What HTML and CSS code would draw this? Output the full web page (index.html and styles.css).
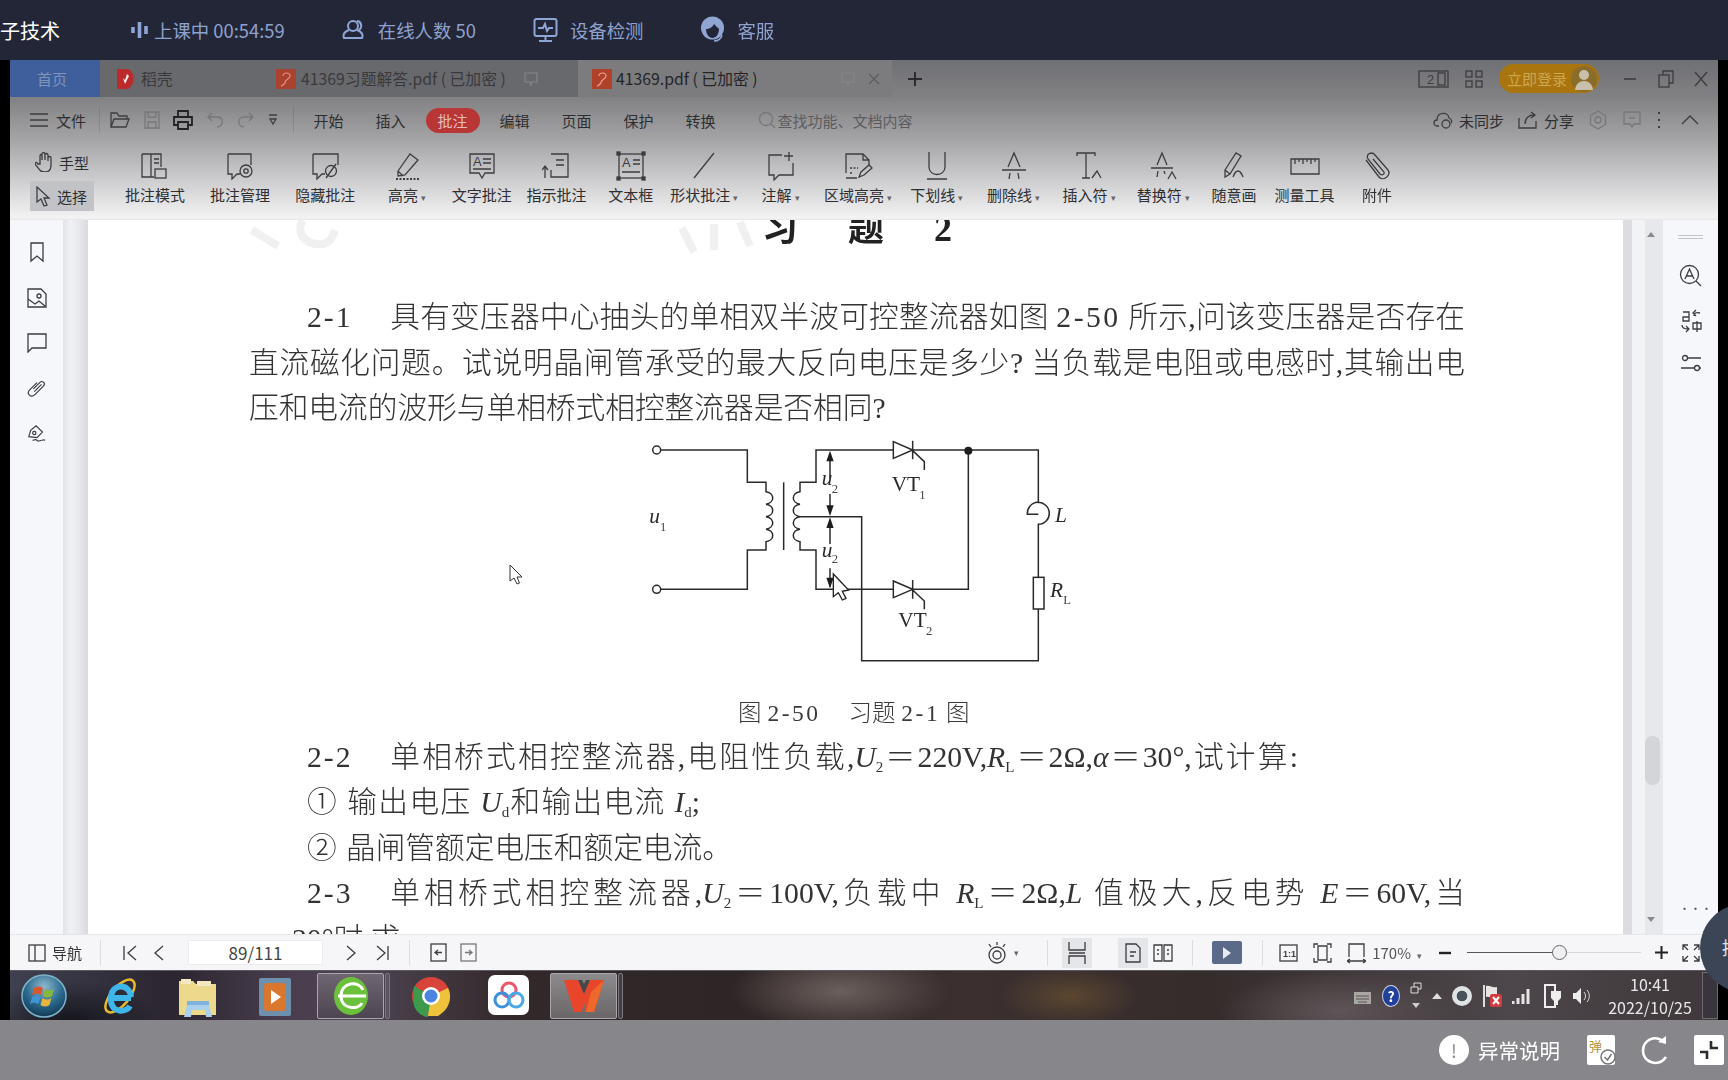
FILE: index.html
```html
<!DOCTYPE html>
<html lang="zh-CN">
<head>
    <meta charset="UTF-8">
    <title>41369.pdf</title>
    <link rel="stylesheet" href="styles.css">
</head>
<body>
    <div class="topbar">
        <div class="course">子技术</div>
        <div class="info info-first">
            <svg class="ti" width="17" height="20" viewBox="0 0 17 20"><path d="M2 7v6M8.500 2v16M15 6v8" stroke-width="3.600"/></svg>
            <span>上课中 00:54:59</span>
        </div>
        <div class="info">
            <svg class="ti" width="24" height="22" viewBox="0 0 24 22"><circle cx="11" cy="7" r="5"/><path d="M7 11c-6 2-6 6-5 8h18c1-2 1-6-5-8M15 2c4 0 6 6 2 9"/></svg>
            <span>在线人数 50</span>
        </div>
        <div class="info">
            <svg class="ti" width="25" height="26" viewBox="0 0 25 26"><rect x="1.500" y="2" width="22" height="17" rx="2"/><path d="M5 11h5l2-4 2 7 2-3h4M12.500 19v4M6 24h13"/></svg>
            <span>设备检测</span>
        </div>
        <div class="info">
            <svg width="25" height="28" viewBox="0 0 25 28"><circle cx="12.500" cy="12" r="11.500" fill="#8fa6d2"/><path d="M6 13c3 0 7-2 8-5 2 2 4 4 5 5 0 5-3 9-6.500 9S6 18 6 13z" fill="#222637"/><path d="M14 25c4 0 7-2 8-6" fill="none" stroke="#8fa6d2" stroke-width="1.500"/></svg>
            <span>客服</span>
        </div>
    </div>

    <div class="stage">
        <div class="window">
            <div class="head">
                <div class="tabs">
                    <div class="tab-home">首页</div>
                    <div class="tab tab-daoke">
                        <svg width="19" height="22" viewBox="0 0 19 22"><path d="M1 1h11c8 4 7 16 0 20H1z" fill="#bb2b2c"/><path d="M11 6l-2 6-2-2 2 6 4-8z" fill="#eee"/></svg>
                        <span>稻壳</span>
                    </div>
                    <div class="tab tab-answer">
                        <svg width="20" height="20" viewBox="0 0 20 20"><rect width="20" height="20" fill="#a9432f"/><path d="M7 7c0-4 7-4 7 0 0 3-5 3-5 7-2 2-3 3-4 3" fill="none" stroke="#e0907c" stroke-width="1.200"/></svg>
                        <span>41369习题解答.pdf ( 已加密 )</span>
                        <svg class="dim-ic" width="16" height="16" viewBox="0 0 16 16"><path d="M2 2h12v9H9l-1 3-1-3H2z"/></svg>
                    </div>
                    <div class="tab tab-active">
                        <svg width="20" height="20" viewBox="0 0 20 20"><rect width="20" height="20" fill="#b0422c"/><path d="M7 7c0-4 7-4 7 0 0 3-5 3-5 7-2 2-3 3-4 3" fill="none" stroke="#e6a18d" stroke-width="1.200"/></svg>
                        <span>41369.pdf ( 已加密 )</span>
                        <svg class="dim-ic msg" width="16" height="16" viewBox="0 0 16 16"><path d="M2 2h12v9H9l-1 3-1-3H2z"/></svg>
                        <svg class="dim-ic close" width="14" height="14" viewBox="0 0 14 14"><path d="M2 2l10 10M12 2L2 12"/></svg>
                    </div>
                    <svg class="plus" width="16" height="16" viewBox="0 0 16 16"><path d="M8 1v14M1 8h14"/></svg>
                    <div class="win-tools">
                        <svg class="ic" width="31" height="18" viewBox="0 0 31 18"><rect x="1" y="1" width="29" height="16"/><text x="9" y="14" class="ic-text">2</text><rect x="20" y="3" width="7" height="12"/></svg>
                        <svg class="ic" width="18" height="18" viewBox="0 0 18 18"><rect x="1" y="1" width="6" height="6"/><rect x="11" y="1" width="6" height="6"/><rect x="1" y="11" width="6" height="6"/><rect x="11" y="11" width="6" height="6"/></svg>
                        <div class="login">
                            <span>立即登录</span>
                            <svg width="26" height="26" viewBox="0 0 26 26"><circle cx="13" cy="13" r="13" fill="#8a6c2b"/><circle cx="13" cy="9" r="5" fill="#c9c0ac"/><path d="M4 24c1-12 17-12 18 0z" fill="#c9c0ac"/></svg>
                        </div>
                        <svg class="ic win-btn" width="14" height="14" viewBox="0 0 14 14"><path d="M1 7h12" stroke-width="1.600"/></svg>
                        <svg class="ic win-btn" width="16" height="18" viewBox="0 0 16 18"><rect x="1" y="5" width="10" height="12"/><path d="M5 5V1h10v12h-4"/></svg>
                        <svg class="ic" width="14" height="16" viewBox="0 0 14 16"><path d="M1 1l12 14M13 1L1 15"/></svg>
                    </div>
                </div>

                <div class="menubar">
                    <svg class="ic" width="18" height="14" viewBox="0 0 18 14"><path d="M0 1h18M0 7h18M0 13h18"/></svg>
                    <span class="file">文件</span>
                    <i class="sep"></i>
                    <div class="quick">
                        <svg class="ic" width="20" height="18" viewBox="0 0 20 18"><path d="M1 16V2h6l2 3h8v3M1 16l3-8h15l-3 8z"/></svg>
                        <svg class="ic light" width="16" height="18" viewBox="0 0 16 18"><path d="M1 1h14v16H1zM4 1v5h8V1M4 17v-6h8v6"/></svg>
                        <svg class="ic strong" width="20" height="20" viewBox="0 0 20 20"><path d="M5 7V1h10v6M5 15H1V7h18v8h-4M5 12h10v7H5z"/></svg>
                        <svg class="ic light" width="17" height="16" viewBox="0 0 17 16"><path d="M5 1L1 5l4 4M1 5h9c7 0 7 9 0 10"/></svg>
                        <svg class="ic light" width="17" height="16" viewBox="0 0 17 16"><path d="M12 1l4 4-4 4M16 5H7c-7 0-7 9 0 10"/></svg>
                        <svg class="ic" width="10" height="12" viewBox="0 0 10 12"><path d="M1 1h8M2 5h6l-3 5z"/></svg>
                    </div>
                    <i class="sep"></i>
                    <nav class="menu">
                        <span>开始</span><span>插入</span><span class="on">批注</span><span>编辑</span><span>页面</span><span>保护</span><span>转换</span>
                    </nav>
                    <div class="search">
                        <svg class="ic light" width="18" height="18" viewBox="0 0 18 18"><circle cx="8" cy="8" r="6.500"/><path d="M13 13l4 4"/></svg>
                        <span>查找功能、文档内容</span>
                    </div>
                    <div class="menu-right">
                        <svg class="ic" width="20" height="18" viewBox="0 0 20 18"><path d="M6 15H4C0 15 0 9 4 9c0-8 11-9 12-2 3 1 3 4 2 5"/><circle cx="13" cy="13" r="4"/></svg>
                        <span class="gap-a">未同步</span>
                        <svg class="ic" width="20" height="18" viewBox="0 0 20 18"><path d="M1 7v10h17v-7M7 13c0-6 4-9 9-9M13 1l4 3-4 3"/></svg>
                        <span class="gap-b">分享</span>
                        <svg class="ic light" width="18" height="20" viewBox="0 0 18 20"><path d="M9 1l7.500 4.500v9L9 19l-7.500-4.500v-9z"/><circle cx="9" cy="10" r="3"/></svg>
                        <svg class="ic light" width="18" height="18" viewBox="0 0 18 18"><path d="M1 1h16v12h-6l-2 3-2-3H1zM6 7h6"/></svg>
                        <svg class="ic dots" width="4" height="18" viewBox="0 0 4 18"><path d="M2 1v2M2 8v2M2 15v2" stroke-width="2"/></svg>
                        <svg class="ic" width="18" height="10" viewBox="0 0 18 10"><path d="M1 9l8-8 8 8"/></svg>
                    </div>
                </div>

                <div class="toolbar">
                    <div class="modes">
                        <div class="mode">
                            <svg class="ic" width="18" height="20" viewBox="0 0 18 20"><path d="M5 12V4c0-2 2-2 2 0v4-6c0-2 3-2 3 0v6-5c0-2 3-2 3 0v6-3c0-2 3-2 3 0v7c0 5-2 7-6 7-5 0-6-3-10-8 0-2 2-2 3 0z"/></svg>
                            <span>手型</span>
                        </div>
                        <div class="mode mode-on">
                            <svg class="ic" width="16" height="21" viewBox="0 0 16 21"><path d="M2 1v15l4-3 3 7 3-1-3-7h5z"/></svg>
                            <span>选择</span>
                        </div>
                    </div>
                    <div class="tools">
                        <div class="tool"><svg class="ic" width="30" height="30" viewBox="0 0 30 30"><path d="M2 3h19v13M2 3v23h12M11 3v23M14 8h5M14 12h5"/><rect x="15" y="18" width="11" height="9"/></svg><span>批注模式</span></div>
                        <div class="tool"><svg class="ic" width="30" height="30" viewBox="0 0 30 30"><path d="M3 3h23v11M3 3v20h4v5l5-5h3"/><circle cx="21" cy="20" r="6"/><circle cx="21" cy="20" r="2.200"/></svg><span>批注管理</span></div>
                        <div class="tool"><svg class="ic" width="30" height="30" viewBox="0 0 30 30"><path d="M3 3h25v11M3 3v20h4v5l5-5h3"/><circle cx="21" cy="20" r="5.500"/><path d="M16 27l10-14"/></svg><span>隐藏批注</span></div>
                        <div class="tool"><svg class="ic" width="30" height="30" viewBox="0 0 30 30"><path d="M6 20L18 3l8 6-13 15-7 1zM6 20l5 5"/><path d="M4 28h24" stroke-dasharray="2 1.500" stroke-width="2"/></svg><span>高亮<em>▾</em></span></div>
                        <div class="tool"><svg class="ic" width="30" height="30" viewBox="0 0 30 30"><path d="M3 3h24v19H18l-3 5-3-5H3z"/><text x="6" y="15" class="ic-text">A</text><path d="M16 8h8M16 12h8M6 18h18"/></svg><span>文字批注</span></div>
                        <div class="tool"><svg class="ic" width="30" height="30" viewBox="0 0 30 30"><path d="M9 3h17v23H9v-7M14 9h8M14 14h8M3 27V15M0 19l3-4 3 4"/></svg><span>指示批注</span></div>
                        <div class="tool"><svg class="ic" width="30" height="30" viewBox="0 0 30 30"><rect x="3" y="3" width="24" height="24"/><rect x="1" y="1" width="3" height="3" class="solid"/><rect x="26" y="1" width="3" height="3" class="solid"/><rect x="1" y="26" width="3" height="3" class="solid"/><rect x="26" y="26" width="3" height="3" class="solid"/><text x="6" y="16" class="ic-text">A</text><path d="M17 9h7M17 13h7M6 21h18"/></svg><span>文本框</span></div>
                        <div class="tool"><svg class="ic" width="30" height="30" viewBox="0 0 30 30"><path d="M5 27L25 2"/></svg><span>形状批注<em>▾</em></span></div>
                        <div class="tool"><svg class="ic" width="30" height="30" viewBox="0 0 30 30"><path d="M16 4H3v20h5v5l5-5h14V12M23 1v9M18 5h9"/></svg><span>注解<em>▾</em></span></div>
                        <div class="tool"><svg class="ic" width="30" height="30" viewBox="0 0 30 30"><path d="M3 22V3h17l6 6v5M20 3v6h6M3 27h11"/><path d="M7 17h8M7 22h3" stroke-dasharray="2 1.500"/><path d="M16 26l2-5 8-7 3 3-8 7z"/></svg><span>区域高亮<em>▾</em></span></div>
                        <div class="tool"><svg class="ic" width="30" height="30" viewBox="0 0 30 30"><path d="M7 1v15c0 10 16 10 16 0V1M5 28h20"/></svg><span>下划线<em>▾</em></span></div>
                        <div class="tool"><svg class="ic" width="30" height="30" viewBox="0 0 30 30"><path d="M9 16L15 2l6 14M3 19h24M11 22l-1 6M19 22l1 6"/></svg><span>删除线<em>▾</em></span></div>
                        <div class="tool"><svg class="ic" width="30" height="30" viewBox="0 0 30 30"><path d="M3 5V2h18v3M12 2v25M8 27h8M18 27l5-7 4 7"/></svg><span>插入符<em>▾</em></span></div>
                        <div class="tool"><svg class="ic" width="30" height="30" viewBox="0 0 30 30"><path d="M9 14L14 2l5 12M3 17h22M10 20l-1 6M16 20l1 3M20 28l4-7 4 7"/></svg><span>替换符<em>▾</em></span></div>
                        <div class="tool"><svg class="ic" width="30" height="30" viewBox="0 0 30 30"><path d="M6 19L17 2l5 3-11 18-5 3zM6 19l5 4M14 26c3-8 7-8 10 0"/></svg><span>随意画</span></div>
                        <div class="tool"><svg class="ic" width="30" height="30" viewBox="0 0 30 30"><path d="M1 8h28v15H1zM5 8v5M9 8v3M13 8v5M17 8v3M21 8v5M25 8v3"/></svg><span>测量工具</span></div>
                        <div class="tool"><svg class="ic" width="30" height="30" viewBox="0 0 30 30"><path d="M4 9L17 26c4 5 13-2 9-7L13 4C10 0 3 3 6 8l12 15c2 2 5 0 4-2L11 8"/></svg><span>附件</span></div>
                    </div>
                </div>
            </div>

            <div class="main">
                <aside class="side-left">
                    <svg class="ic" width="16" height="22" viewBox="0 0 16 22"><path d="M2 2h12v18l-6-5-6 5z"/></svg>
                    <svg class="ic" width="20" height="20" viewBox="0 0 20 20"><path d="M1 1h13l5 5v13H1zM1 11l7 5 4-3 6 5"/><circle cx="12" cy="8" r="2"/></svg>
                    <svg class="ic" width="20" height="20" viewBox="0 0 20 20"><path d="M1 1h18v14H5l-4 4z"/></svg>
                    <svg class="ic" width="20" height="20" viewBox="0 0 22 22"><path d="M7 12l7-7c3-3 7 1 4 4l-9 9c-5 5-10-1-6-5l8-8M8 15l8-8"/></svg>
                    <svg class="ic" width="20" height="20" viewBox="0 0 22 22"><path d="M2 15l2-7 6-5 7 7-6 6zM6 19c3 0 3-2 5 0s3 0 5 0 2-1 4 0"/><circle cx="8" cy="11" r="1.800"/></svg>
                </aside>
                <div class="gutter"></div>

                <div class="paper">
                    <svg class="mark mark-a" width="90" height="30" viewBox="0 0 90 30"><path d="M4 10l26 16M55 0c-8 12 2 26 20 24 8-2 10-8 12-14"/></svg>
                    <svg class="mark mark-b" width="80" height="36" viewBox="0 0 80 36"><path d="M8 8l12 24M40 4v26M66 2l10 24"/></svg>

                    <div class="doc-title">习<b></b>题<b></b>2</div>
                    <div class="line full indent"><span class="num">2-1</span>具有变压器中心抽头的单相双半波可控整流器如图 <span class="lat">2-50</span> 所示,问该变压器是否存在</div>
                    <div class="line full">直流磁化问题。试说明晶闸管承受的最大反向电压是多少? 当负载是电阻或电感时,其输出电</div>
                    <div class="line">压和电流的波形与单相桥式相控整流器是否相同?</div>

                    <svg class="circuit" width="480" height="260" viewBox="0 30 1440 780">
                        <g class="wire">
                            <circle cx="110" cy="90" r="12"/>
                            <circle cx="110" cy="508" r="12"/>
                            <path d="M122 90H382V187H438V215a24 19 0 0 1 0 37.500a24 19 0 0 1 0 37.500a24 19 0 0 1 0 37.500a24 19 0 0 1 0 37.500V390H382V508H122"/>
                            <path d="M491 187V390"/>
                            <path d="M820 90H588V187H540V215a24 19 0 0 0 0 37.500a24 19 0 0 0 0 37.500H725V722H1255V567M540 290a24 19 0 0 0 0 37.500a24 19 0 0 0 0 37.500V390H588V508H820"/>
                            <path d="M820 65V115L878 90ZM878 62V118M878 92L913 125V150M878 90H1255V250"/>
                            <path d="M820 483V533L878 508ZM878 480V536M878 510L913 543V568M878 508H1045V92"/>
                            <path d="M1255 283H1222A33 33 0 1 1 1255 313V472"/>
                            <rect x="1240" y="472" width="32" height="95"/>
                            <path d="M630 100V175M630 222V280M630 300V372M630 445V500"/>
                        </g>
                        <circle cx="1045" cy="92" r="12" class="node"/>
                        <path class="node" d="M630 92l-11 32h22zM630 288l-11-32h22zM630 292l-11 32h22zM630 505l-11-32h22z"/>
                        <text x="605" y="196" class="sym it">u</text><text x="635" y="218" class="sub">2</text>
                        <text x="605" y="410" class="sym it">u</text><text x="635" y="430" class="sub">2</text>
                        <text x="88" y="310" class="sym it">u</text><text x="120" y="332" class="sub">1</text>
                        <text x="815" y="213" class="sym">VT</text><text x="898" y="236" class="sub">1</text>
                        <text x="835" y="622" class="sym">VT</text><text x="918" y="646" class="sub">2</text>
                        <text x="1305" y="305" class="sym it">L</text>
                        <text x="1290" y="530" class="sym it">R</text><text x="1330" y="552" class="sub">L</text>
                        <path class="cursor-big" d="M640 462V530L655 518L667 540L678 535L667 514L686 510Z"/>
                    </svg>

                    <div class="line caption">图 <span class="lat">2-50</span><b></b>习题 <span class="lat">2-1</span> 图</div>
                    <div class="line indent w-22"><span class="num num-b">2-2</span>单相桥式相控整流器,电阻性负载,<i>U</i><sub>2</sub>＝220V,<i>R</i><sub>L</sub>＝2Ω,<i>α</i>＝30°,试计算:</div>
                    <div class="line indent w-a"><span class="circ">①</span>输出电压 <i>U</i><sub>d</sub>和输出电流 <i>I</i><sub>d</sub>;</div>
                    <div class="line indent"><span class="circ">②</span>晶闸管额定电压和额定电流。</div>
                    <div class="line full indent"><span class="num num-c">2-3</span>单相桥式相控整流器,<i>U</i><sub>2</sub>＝100V,负载中 <i>R</i><sub>L</sub>＝2Ω,<i>L</i> 值极大,反电势 <i>E</i>＝60V,当</div>
                    <div class="line cut">30°时,求</div>

                    <svg class="cursor-small" width="14" height="22" viewBox="0 0 14 22"><path d="M1 1V17L5 14L8 20L10.500 19L8 13L13 13Z"/></svg>
                </div>

                <div class="scroll">
                    <i class="arrow-up"></i>
                    <i class="thumb"></i>
                    <i class="arrow-down"></i>
                </div>

                <aside class="side-right">
                    <i class="grip"></i>
                    <svg class="ic" width="24" height="24" viewBox="0 0 24 24"><circle cx="10.500" cy="10.500" r="9"/><path d="M6 15l4.500-10L15 15M7.500 12h6M17 17l5 5" /></svg>
                    <svg class="ic" width="22" height="24" viewBox="0 0 22 24"><path d="M3 3h6v9H3V8h6M14 7c0-3 2-4 6-3M16 1l-3 3 3 3M2 16c0 3 2 4 6 4M6 17l3 3-3 3M13 14h8v6h-8zM17 12v11"/></svg>
                    <svg class="ic" width="22" height="18" viewBox="0 0 22 18"><circle cx="5" cy="4" r="2.500"/><path d="M8 4h13M1 14h13"/><circle cx="17" cy="14" r="2.500"/><path d="M19 14h2"/></svg>
                    <div class="more">•••</div>
                </aside>
            </div>

            <div class="status">
                <svg class="ic" width="18" height="18" viewBox="0 0 18 18"><rect x="1" y="1" width="16" height="16"/><path d="M7 1v16"/></svg>
                <span class="nav-label">导航</span>
                <i class="sep s-a"></i>
                <svg class="ic" width="15" height="16" viewBox="0 0 15 16"><path d="M1 1v14M13 1L5 8l8 7"/></svg>
                <svg class="ic g-a" width="10" height="16" viewBox="0 0 10 16"><path d="M9 1L1 8l8 7"/></svg>
                <div class="page-box">89/111</div>
                <svg class="ic" width="10" height="16" viewBox="0 0 10 16"><path d="M1 1l8 7-8 7"/></svg>
                <svg class="ic g-b" width="13" height="16" viewBox="0 0 13 16"><path d="M1 1l8 7-8 7M12 1v14"/></svg>
                <i class="sep s-b"></i>
                <svg class="ic" width="17" height="19" viewBox="0 0 17 19"><rect x="1" y="1" width="15" height="17"/><path d="M12 9.500H5M8 7L5 9.500 8 12"/></svg>
                <svg class="ic light g-c" width="17" height="19" viewBox="0 0 17 19"><rect x="1" y="1" width="15" height="17"/><path d="M5 9.500h7M9 7l3 2.500L9 12"/></svg>

                <div class="status-right">
                    <svg class="ic" width="22" height="24" viewBox="0 0 22 24"><circle cx="11" cy="14" r="8"/><circle cx="11" cy="14" r="4"/><path d="M11 1v3M3 3l2 3M19 3l-2 3"/></svg>
                    <em class="drop">▾</em>
                    <i class="sep s-c"></i>
                    <div class="flat on-flat"><svg class="ic" width="20" height="22" viewBox="0 0 20 22"><path d="M2 0v8h16V0M2 22v-8h16v8M2 11h16"/></svg></div>
                    <div class="flat on-flat f-a"><svg class="ic" width="16" height="20" viewBox="0 0 16 20"><path d="M1 1h10l4 4v14H1zM5 9h6M5 13h4"/></svg></div>
                    <div class="flat"><svg class="ic" width="20" height="20" viewBox="0 0 20 20"><path d="M1 2h8v16H1zM11 2h8v16h-8zM4 7h2M14 7h2M4 11h2M14 11h2"/></svg></div>
                    <i class="sep s-d"></i>
                    <div class="play"><svg width="10" height="14" viewBox="0 0 10 14"><path d="M1 1l8 6-8 6z" fill="#e8ebf2"/></svg></div>
                    <i class="sep s-e"></i>
                    <svg class="ic" width="19" height="18" viewBox="0 0 19 18"><rect x="1" y="1" width="17" height="16"/><text x="4" y="13" class="ic-mini">1:1</text></svg>
                    <svg class="ic g-d" width="19" height="22" viewBox="0 0 19 22"><path d="M5 2H1v4M14 2h4v4M5 20H1v-4M14 20h4v-4M5 4v14h9V4z"/></svg>
                    <svg class="ic g-d" width="19" height="22" viewBox="0 0 19 22"><path d="M2 15V2h15v13M0 19h19M3 17l-3 2 3 2M16 17l3 2-3 2"/></svg>
                    <span class="zoom-val">170%<em>▾</em></span>
                    <svg class="ic strong minus" width="12" height="4" viewBox="0 0 12 4"><path d="M0 2h12" stroke-width="2.400"/></svg>
                    <div class="slider"><b></b></div>
                    <svg class="ic strong" width="13" height="13" viewBox="0 0 13 13"><path d="M6.500 0v13M0 6.500h13" stroke-width="2"/></svg>
                    <svg class="ic full-ic" width="18" height="18" viewBox="0 0 18 18"><path d="M1 6V1h5M12 1h5v5M17 12v5h-5M6 17H1v-5M1 1l5 5M17 1l-5 5M17 17l-5-5M1 17l5-5"/></svg>
                </div>
            </div>

            <div class="taskbar">
                <svg class="orb" width="46" height="44" viewBox="0 0 46 44">
                    <defs>
                        <radialGradient id="orbGlass" cx="50%" cy="28%" r="75%">
                            <stop offset="0" stop-color="#8fb9cc"/>
                            <stop offset="0.55" stop-color="#2c6a8e"/>
                            <stop offset="1" stop-color="#0f3550"/>
                        </radialGradient>
                    </defs>
                    <ellipse cx="23" cy="22" rx="22" ry="21" fill="url(#orbGlass)" stroke="#7fb5cc" stroke-width="1.500"/>
                    <path d="M13 14c3-2 6-2 9 0l-2 7c-3-2-6-2-9 0z" fill="#d9562f"/>
                    <path d="M24 15c3 2 6 2 9 0l-2 7c-3 2-6 2-9 0z" fill="#86b83c"/>
                    <path d="M11 23c3-2 6-2 8.500 0l-2 7c-3-2-6-2-8.500 0z" fill="#3f94d6"/>
                    <path d="M21.500 24c3 2 6 2 9 0l-2 7c-3 2-6 2-9 0z" fill="#e7b63c"/>
                </svg>
                <svg class="tb-ie" width="40" height="44" viewBox="0 0 40 44"><ellipse cx="20" cy="22" rx="20" ry="9" transform="rotate(-50 20 22)" fill="none" stroke="#e9b92e" stroke-width="2.500"/><path d="M31 24H11c0-15 19-15 20-1M11 27c1 12 15 12 19 5" fill="none" stroke="#3fb6ea" stroke-width="6"/></svg>
                <svg class="tb-folder" width="40" height="44" viewBox="0 0 40 44"><path d="M1 6h14l3 3h20v31H1z" fill="#ecd98c"/><path d="M3 4h10v5H3zM19 6h14v5H19z" fill="#f2e9c2"/><path d="M9 34V26h22v8z" fill="#7fb2dc"/><path d="M6 42l3-12h22l3 12h-6l-1-7H14l-1 7z" fill="#a9d0ec"/></svg>
                <svg class="tb-media" width="34" height="40" viewBox="0 0 34 40"><rect x="1" y="1" width="32" height="38" rx="2" fill="#6d90ad"/><rect x="6" y="6" width="22" height="28" rx="3" fill="#d9772f"/><path d="M13 13l10 7-10 7z" fill="#fff"/></svg>
                <div class="tile tb-360">
                    <svg width="36" height="40" viewBox="0 0 36 40"><ellipse cx="18" cy="20" rx="17" ry="19" fill="#6cc13c"/><path d="M5 20h28M30 14c-4-10-22-8-22 6s18 14 21 7" fill="none" stroke="#fff" stroke-width="3"/></svg>
                </div>
                <i class="tile-end"></i>
                <svg class="tb-chrome" width="38" height="44" viewBox="0 0 38 44"><circle cx="19" cy="22" r="19" fill="#d8443a"/><path d="M19 22L2 12v20c3 7 9 11 14 11z" fill="#3d9a4c"/><path d="M19 22l17-8c4 8 3 20-10 28H16z" fill="#eec23a"/><circle cx="19" cy="22" r="9" fill="#fff"/><circle cx="19" cy="22" r="6.500" fill="#4a84e0"/></svg>
                <div class="tb-baidu">
                    <svg width="32" height="30" viewBox="0 0 32 30"><circle cx="16" cy="10" r="7" fill="none" stroke="#e8576a" stroke-width="3"/><circle cx="9" cy="20" r="7" fill="none" stroke="#3c8fdc" stroke-width="3"/><circle cx="23" cy="20" r="7" fill="none" stroke="#49a8e8" stroke-width="3"/></svg>
                </div>
                <div class="tile tb-wps">
                    <svg width="40" height="34" viewBox="0 0 40 34"><path d="M0 1h14l6 14 6-14h14l-10 32h-8l-2-10-2 10h-8z" fill="#e9452a"/><path d="M14 1l6 14 6-14h-4l-2 4-2-4z" fill="#4a4646"/><path d="M22 33l5-20 13-12-10 32z" fill="#f0672b"/></svg>
                </div>
                <i class="tile-end"></i>

                <div class="tray">
                    <svg width="19" height="20" viewBox="0 0 19 20"><rect x="1" y="6" width="17" height="12" fill="#a9a7a3"/><path d="M3 10h13M3 13h13M5 16h9M10 6V3h6" fill="none" stroke="#575553"/></svg>
                    <div class="t-help">?</div>
                    <svg class="t-mini" width="12" height="28" viewBox="0 0 12 28"><path d="M1 5h7v6H1zM4 5V1h7v6H8" fill="none" stroke="#ddd"/><path d="M2 21h8l-4 5z" fill="#ccc"/></svg>
                    <svg width="10" height="6" viewBox="0 0 10 6"><path d="M5 0l5 6H0z" fill="#ddd"/></svg>
                    <div class="t-shield"></div>
                    <svg width="20" height="24" viewBox="0 0 20 24"><path d="M2 1v22" stroke="#ddd" stroke-width="2"/><path d="M4 2c4-1 6 2 11 1v11c-5 1-7-2-11-1z" fill="#e8e4e4"/><rect x="8" y="10" width="12" height="13" rx="2" fill="#d13a3f"/><path d="M11 13l6 7M17 13l-6 7" stroke="#fff" stroke-width="2"/></svg>
                    <svg width="20" height="18" viewBox="0 0 20 18"><path d="M1 17v-3M6 17v-6M11 17V7M16 17V2" stroke="#e6e6e6" stroke-width="3"/></svg>
                    <svg width="20" height="26" viewBox="0 0 20 26"><path d="M3 2h10v22H3z" fill="none" stroke="#eee" stroke-width="2"/><path d="M9 8h10v7l-3 3v4h-4v-4l-3-3z" fill="#eee"/></svg>
                    <svg width="20" height="22" viewBox="0 0 20 22"><path d="M1 8h3l5-5v16l-5-5H1z" fill="#eee"/><path d="M12 7c2 2 2 6 0 8M15 5c3 3 3 9 0 12" fill="none" stroke="#ddd"/></svg>
                    <div class="clock"><span>10:41</span><span>2022/10/25</span></div>
                    <i class="show-desk"></i>
                </div>
            </div>
            <div class="float-ball">拖</div>
        </div>
    </div>

    <div class="bottom">
        <div class="notice">
            <div class="notice-dot">!</div>
            <span>异常说明</span>
        </div>
        <div class="danmu"><span>弹</span><svg width="16" height="16" viewBox="0 0 16 16"><circle cx="8" cy="8" r="7" fill="#fff" stroke="#777" stroke-width="1.500"/><path d="M4.500 8l3 3 4-6" fill="none" stroke="#777" stroke-width="1.500"/></svg></div>
        <svg class="reload" width="28" height="30" viewBox="0 0 28 30"><path d="M23 7C14-1 2 5 2 16c0 11 15 17 23 6" fill="none" stroke="#fff" stroke-width="2.600"/><path d="M17 7l8 2V1z" fill="#fff"/></svg>
        <div class="shrink"><svg width="22" height="22" viewBox="0 0 22 22"><path d="M13 2v7h7M2 13h7v7" fill="none" stroke="#2d2d30" stroke-width="2.600"/></svg></div>
    </div>
</body>
</html>
```
FILE: styles.css
```css
* {
    box-sizing: border-box;
}
body {
    margin: 0;
    width: 1728px;
    height: 1080px;
    overflow: hidden;
    background-color: #87868b;
    font-family: "Noto Sans CJK SC", "Noto Sans", sans-serif;
    display: flex;
    flex-direction: column;
    filter: blur(0.4px);
}
em {
    font-style: normal;
}

/* top bar of the class room */
.topbar {
    height: 60px;
    background-color: #222637;
    display: flex;
    align-items: center;
    gap: 57px;
    color: #8ea2cd;
    font-size: 18.400px;
}
.course {
    width: 74px;
    color: #fff;
    font-size: 20px;
}
.info {
    display: flex;
    align-items: center;
    gap: 12px;
}
.info-first {
    gap: 6px;
}
.ti {
    fill: none;
    stroke: #8ea6d6;
    stroke-width: 2;
}

.stage {
    height: 960px;
    background-color: #000;
    padding: 0 10px;
}
.window {
    position: relative;
    height: 960px;
    display: flex;
    flex-direction: column;
}

/* shared icon look */
.ic {
    fill: none;
    stroke: #3d3d40;
    stroke-width: 1.300;
    flex: none;
}
.ic.light {
    stroke: #77777a;
}
.ic.strong {
    stroke: #222;
    stroke-width: 1.800;
}
.ic .solid {
    fill: #3d3d40;
}
.ic text {
    fill: #3d3d40;
    stroke: none;
    font-family: "Liberation Sans", sans-serif;
}
.ic-text {
    font-size: 13px;
}
.ic-mini {
    font-size: 9px;
    font-weight: bold;
}
.sep {
    width: 1px;
    height: 26px;
    background-color: rgba(0, 0, 0, 0.1);
    flex: none;
}

/* window head */
.head {
    height: 160px;
    flex: none;
    background: linear-gradient(#6f7074 0, #818184 37px, #a5a5a7 80px, #cfcfd1 122px, #f3f3f4 158px, #e6e6e8 160px);
    color: #2e2e30;
}
.tabs {
    height: 37px;
    display: flex;
    align-items: stretch;
    font-size: 15.800px;
    color: #39393c;
}
.tab-home {
    width: 90px;
    padding-right: 6px;
    background-color: #3f5f9c;
    color: #7f93bb;
    font-size: 15px;
    display: flex;
    align-items: center;
    justify-content: center;
}
.tab {
    display: flex;
    align-items: center;
    gap: 6px;
    background-color: #68696d;
}
.tab-daoke {
    width: 162px;
    padding-left: 16px;
}
.tab-answer {
    width: 316px;
    padding-left: 14px;
    gap: 5px;
}
.tab-active {
    width: 314px;
    padding-left: 14px;
    gap: 4px;
    background-color: #7c7c7f;
    color: #242426;
}
.dim-ic {
    fill: none;
    stroke: #858588;
    stroke-width: 1.200;
    margin-left: 12px;
}
.tab-active .msg {
    margin-left: 78px;
}
.tab-active .close {
    margin-left: 7px;
    stroke: #5c5c5f;
}
.plus {
    margin: 11px 0 0 15px;
    fill: none;
    stroke: #2b2b2d;
    stroke-width: 2;
}
.win-tools {
    margin-left: auto;
    display: flex;
    align-items: center;
    gap: 16px;
    padding-right: 10px;
}
.win-tools .ic {
    stroke: #3c3c3f;
}
.win-btn {
    margin-right: 4.500px;
}
.login {
    width: 100px;
    height: 29px;
    border-radius: 15px;
    background-color: #a8750f;
    color: #cfa650;
    font-size: 15px;
    display: flex;
    align-items: center;
    justify-content: space-between;
    padding: 0 2px 0 8px;
    margin-right: 8px;
}
.menubar {
    height: 43px;
    padding: 3px 0 0 20px;
    display: flex;
    align-items: center;
    font-size: 15px;
}
.file {
    margin: 0 13px 0 8px;
}
.quick {
    display: flex;
    align-items: center;
    gap: 13.500px;
    margin: 0 15px 0 10px;
}
.menu {
    display: flex;
    align-items: center;
    gap: 32px;
    margin-left: 20px;
}
.menu .on {
    width: 54px;
    height: 25px;
    margin: 0 -12px;
    border-radius: 13px;
    background-color: #b93636;
    color: #e6bcbc;
    display: flex;
    align-items: center;
    justify-content: center;
}
.search {
    display: flex;
    align-items: center;
    gap: 2px;
    margin-left: 42px;
    color: #5c5c5f;
}
.menu-right {
    margin-left: auto;
    display: flex;
    align-items: center;
    gap: 6px;
    padding-right: 19px;
}
.gap-a {
    margin-right: 8px;
}
.gap-b {
    margin-right: 9px;
}
.menu-right .light {
    margin-right: 10px;
}
.dots {
    margin-right: 14px;
}
.toolbar {
    height: 80px;
    display: flex;
    font-size: 15px;
}
.modes {
    width: 102.500px;
    padding: 7px 0 0 20px;
    display: flex;
    flex-direction: column;
    gap: 4px;
}
.mode {
    width: 64px;
    height: 30px;
    display: flex;
    align-items: center;
    gap: 6px;
    padding-left: 5px;
}
.mode-on {
    background-color: #c2c3c6;
}
.tools {
    display: grid;
    grid-template-columns: 85px 85px 85.500px 78px 71.500px 78px 70.500px 76.500px 76px 79px 78.500px 75px 76px 72.500px 69px 72px 73px;
}
.tool {
    display: flex;
    flex-direction: column;
    align-items: center;
    padding-top: 11px;
    gap: 2px;
}
.tool span {
    line-height: 24px;
    white-space: nowrap;
}
.tool em, .zoom-val em, .drop {
    font-size: 9px;
    color: #66666a;
    margin-left: 3px;
}

/* reading area */
.main {
    height: 714px;
    flex: none;
    display: flex;
    overflow: hidden;
}
.side-left {
    width: 53px;
    flex: none;
    background-color: #f5f7fb;
    display: flex;
    flex-direction: column;
    align-items: center;
    padding-top: 21px;
    gap: 25px;
}
.gutter {
    width: 25px;
    flex: none;
    background: linear-gradient(90deg, #e2e3e7, #f0f1f4 30%, #e9eaed 60%, #d9dade);
}
.paper {
    position: relative;
    width: 1535px;
    flex: none;
    background-color: #fff;
    padding-left: 161px;
    color: #333;
    font-family: "Liberation Serif", "Noto Sans CJK SC", serif;
    font-size: 29.700px;
    font-weight: 300;
    overflow: hidden;
}
.mark {
    position: absolute;
    top: 0;
    fill: none;
    stroke: #f0f0f0;
    stroke-width: 8;
}
.mark-a {
    left: 160px;
}
.mark-b {
    left: 586px;
}
.doc-title {
    position: relative;
    margin-top: -11px;
    height: 86px;
    width: 1216px;
    display: flex;
    justify-content: center;
    align-items: flex-start;
    font-size: 36px;
    font-weight: bold;
    line-height: 40px;
    color: #222;
}
.doc-title b {
    width: 50px;
}
.line {
    height: 45.500px;
    line-height: 45.500px;
    white-space: nowrap;
}
.line.full {
    width: 1216px;
    white-space: normal;
    text-align: justify;
    text-align-last: justify;
}
.line.indent {
    margin-left: 58px;
}
.line.full.indent {
    width: 1158px;
}
.line.w-22 {
    width: 991px;
    white-space: normal;
    text-align: justify;
    text-align-last: justify;
}
.line.w-a {
    width: 393px;
    white-space: normal;
    text-align: justify;
    text-align-last: justify;
}
.num {
    display: inline-block;
    width: 83px;
    letter-spacing: 2px;
    text-align: left;
    text-align-last: left;
}
.num-b {
    width: 81px;
}
.num-c {
    width: 79px;
}
.circ {
    display: inline-block;
    width: 39px;
    text-align: left;
    text-align-last: left;
}
.lat {
    letter-spacing: 2.500px;
}
.line i {
    font-style: italic;
}
.line sub {
    font-size: 15px;
    line-height: 0;
    vertical-align: -5px;
}
.caption {
    height: 44px;
    line-height: 44px;
    padding-left: 489px;
    font-size: 23.500px;
    color: #3a3a3a;
}
.caption b {
    display: inline-block;
    width: 28px;
}
.cut {
    margin-left: 43px;
}
.circuit {
    display: block;
    margin: -2px 0 1px 371px;
}
.wire {
    fill: none;
    stroke: #2a2a2a;
    stroke-width: 4.500;
}
.wire circle, .wire rect {
    fill: #fff;
}
.node {
    fill: #1d1d1d;
}
.sym {
    font-family: "Liberation Serif", serif;
    font-size: 64px;
    fill: #2a2a2a;
}
.it {
    font-style: italic;
}
.sub {
    font-family: "Liberation Serif", serif;
    font-size: 38px;
    fill: #444;
}
.cursor-big {
    fill: #fff;
    stroke: #222;
    stroke-width: 4;
}
.cursor-small {
    position: absolute;
    left: 421px;
    top: 344px;
    fill: #fff;
    stroke: #333;
    stroke-width: 1;
}
.scroll {
    position: relative;
    width: 40px;
    flex: none;
    background: linear-gradient(90deg, #dcdde0 22%, #f2f3f5 22%, #f2f3f5 55%, #e6e8ec 55%);
}
.arrow-up, .arrow-down {
    position: absolute;
    left: 24px;
    border-left: 4px solid transparent;
    border-right: 4px solid transparent;
}
.arrow-up {
    top: 12px;
    border-bottom: 5px solid #8a8a8e;
}
.arrow-down {
    bottom: 12px;
    border-top: 5px solid #8a8a8e;
}
.thumb {
    position: absolute;
    left: 22px;
    top: 516px;
    width: 15px;
    height: 49px;
    border-radius: 7px;
    background-color: #d4d5d8;
}
.side-right {
    position: relative;
    flex: 1;
    background-color: #f5f7fb;
    display: flex;
    flex-direction: column;
    align-items: center;
    padding-top: 44px;
    gap: 21px;
}
.grip {
    position: absolute;
    top: 15px;
    left: 15px;
    width: 25px;
    height: 4px;
    border-top: 1px solid #c3c4c8;
    border-bottom: 1px solid #c3c4c8;
}
.more {
    position: absolute;
    top: 680px;
    left: 16px;
    font-size: 11px;
    color: #55555a;
}

/* status bar */
.status {
    height: 36px;
    flex: none;
    background-color: #f6f6f8;
    border-top: 1px solid #e6e6e8;
    display: flex;
    align-items: center;
    padding-left: 18px;
    font-size: 15px;
    color: #333;
}
.nav-label {
    margin-left: 6px;
}
.s-a {
    margin: 0 22px 0 18px;
}
.g-a {
    margin-left: 16px;
}
.page-box {
    width: 135px;
    height: 25px;
    margin: 0 23px 0 24px;
    background-color: #fff;
    border: 1px solid #ececee;
    text-align: center;
    font-size: 17px;
    line-height: 24px;
    color: #444;
}
.g-b {
    margin-left: 20px;
}
.s-b {
    margin: 0 20px;
}
.g-c {
    margin-left: 13px;
}
.status-right {
    margin-left: auto;
    display: flex;
    align-items: center;
    padding-right: 18px;
}
.drop {
    margin-left: 6px;
}
.s-c {
    margin: 0 14px 0 28px;
}
.flat {
    width: 30px;
    height: 30px;
    display: flex;
    align-items: center;
    justify-content: center;
}
.on-flat {
    background-color: #e5e6ea;
}
.f-a {
    margin-left: 26px;
}
.s-d {
    margin: 0 19px 0 14px;
}
.play {
    width: 30px;
    height: 23px;
    border-radius: 2px;
    background-color: #5c6a89;
    display: flex;
    align-items: center;
    justify-content: center;
}
.s-e {
    margin: 0 16px 0 20px;
}
.g-d {
    margin-left: 15px;
}
.zoom-val {
    margin-left: 6px;
    white-space: nowrap;
    color: #55555a;
    font-size: 15px;
}
.zoom-val em {
    margin-left: 6px;
}
.minus {
    margin: 0 16px 0 17px;
}
.slider {
    position: relative;
    width: 174px;
    height: 1px;
    margin-right: 14px;
    background: linear-gradient(90deg, #55555a 53%, #d8d8dc 53%);
}
.slider b {
    position: absolute;
    top: -7px;
    left: 85px;
    width: 15px;
    height: 15px;
    border-radius: 50%;
    background-color: #f0f0f2;
    border: 1.500px solid #66666a;
}
.full-ic {
    margin-left: 14px;
}

/* windows taskbar */
.taskbar {
    position: relative;
    height: 50px;
    flex: none;
    display: flex;
    align-items: center;
    border-top: 1px solid #5a5a60;
    background:
        radial-gradient(ellipse 90px 40px at 60px 50px, #15161c, transparent),
        radial-gradient(ellipse 110px 40px at 830px 20px, #6b5f5c, transparent),
        radial-gradient(ellipse 70px 30px at 1060px 25px, #5b4630, transparent),
        radial-gradient(ellipse 120px 40px at 1330px 40px, #5f5558, transparent),
        linear-gradient(90deg, #3f4150, #2b2530 160px, #4a3e4e 280px, #4c4350 360px, #33292b 500px, #2d2526 720px, #3b302f 950px, #352c2c 1200px, #4d464a 1500px, #3f373a);
}
.orb {
    position: absolute;
    left: 11px;
    top: 3px;
}
.taskbar svg {
    flex: none;
}
.tb-ie {
    position: absolute;
    left: 90px;
    top: 3px;
}
.tb-folder {
    position: absolute;
    left: 168px;
    top: 4px;
}
.tb-media {
    position: absolute;
    left: 248px;
    top: 6px;
}
.tile {
    position: absolute;
    top: 2px;
    height: 46px;
    border: 1px solid #a9a7ad;
    border-radius: 2px;
    display: flex;
    align-items: center;
    justify-content: center;
}
.tb-360 {
    left: 307px;
    width: 67px;
    background: linear-gradient(#6f6672, #4d4550);
}
.tb-wps {
    left: 540px;
    width: 67px;
    background: linear-gradient(#8c8a8c, #6a6668);
}
.tile-end {
    position: absolute;
    top: 2px;
    width: 5px;
    height: 46px;
    border: 1px solid #7a787e;
    border-radius: 2px;
    background-color: rgba(255, 255, 255, 0.1);
}
.tb-360 + .tile-end {
    left: 375px;
}
.tb-wps + .tile-end {
    left: 608px;
}
.tb-chrome {
    position: absolute;
    left: 402px;
    top: 3px;
}
.tb-baidu {
    position: absolute;
    left: 478px;
    top: 4px;
    width: 41px;
    height: 40px;
    border-radius: 7px;
    background-color: #fff;
    display: flex;
    align-items: center;
    justify-content: center;
}
.tray {
    margin-left: auto;
    display: flex;
    align-items: center;
    gap: 10px;
    color: #e8e8ea;
}
.t-help {
    width: 18px;
    height: 22px;
    border-radius: 50%;
    background-color: #21409a;
    border: 1px solid #ccd;
    color: #fff;
    text-align: center;
    font-size: 14px;
    font-weight: bold;
    line-height: 20px;
}
.t-shield {
    width: 20px;
    height: 20px;
    border-radius: 50%;
    background: radial-gradient(circle, #46535a 35%, #dfe3e4 40%);
}
.clock {
    width: 84px;
    margin-left: 6px;
    display: flex;
    flex-direction: column;
    align-items: center;
    font-size: 16px;
    line-height: 23px;
}
.show-desk {
    width: 16px;
    height: 47px;
    border: 1px solid #6b6b70;
    background-color: #38363c;
}

.float-ball {
    position: absolute;
    left: 1690px;
    top: 844px;
    width: 88px;
    height: 88px;
    border-radius: 50%;
    background-color: #3b4556;
    color: #dfe3ea;
    padding: 30px 0 0 22px;
    font-size: 18px;
}

/* bar under the video */
.bottom {
    height: 60px;
    display: flex;
    align-items: center;
    padding-left: 1439px;
    color: #fff;
}
.notice {
    display: flex;
    align-items: center;
    gap: 9px;
    font-size: 20.500px;
}
.notice-dot {
    width: 30px;
    height: 30px;
    border-radius: 50%;
    background-color: #fff;
    color: #8a8a8e;
    text-align: center;
    font-size: 18px;
    line-height: 30px;
}
.danmu {
    position: relative;
    width: 28px;
    height: 30px;
    margin-left: 27px;
    background-color: #fff;
    border-radius: 2px;
    color: #b8923e;
    font-size: 13px;
    padding-left: 2px;
    line-height: 22px;
}
.danmu svg {
    position: absolute;
    right: -1px;
    bottom: 0;
}
.reload {
    margin-left: 26px;
}
.shrink {
    width: 30px;
    height: 30px;
    margin-left: 25px;
    background-color: #fff;
    border-radius: 2px;
    display: flex;
    align-items: center;
    justify-content: center;
}
```
